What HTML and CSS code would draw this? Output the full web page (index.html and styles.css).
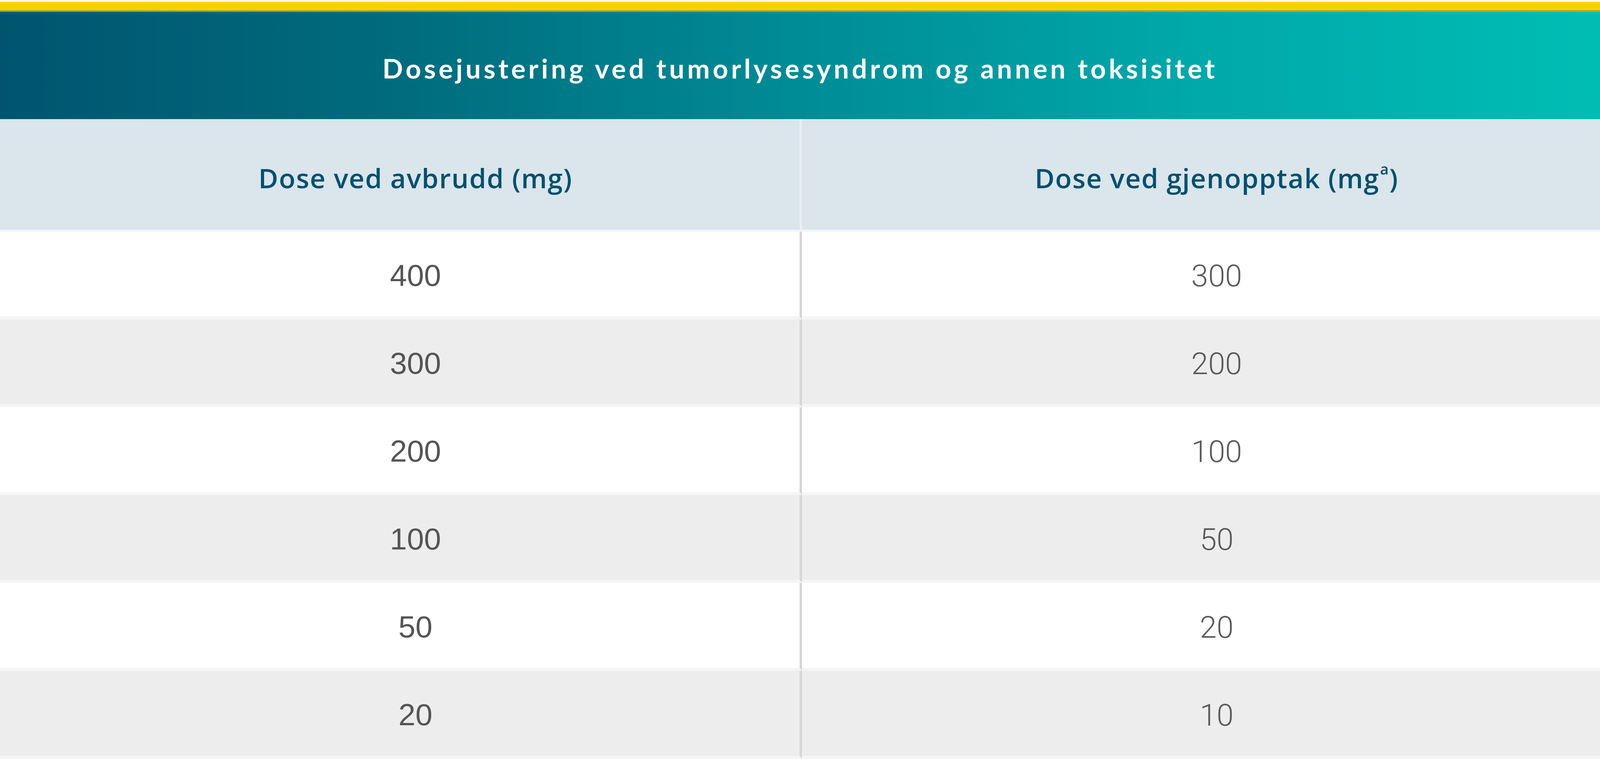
FILE: index.html
```html
<!DOCTYPE html>
<html lang="no">
<head>
<meta charset="utf-8">
<title>Dosejustering</title>
<link rel="stylesheet" href="styles.css">
</head>
<body>
<div class="page">
  <div class="top-cream"></div>
  <div class="top-yellow"></div>
  <div class="top-olive"></div>
  <div class="title-band">
    <h1 class="title">Dosejustering ved tumorlysesyndrom og annen toksisitet</h1>
  </div>
  <div class="table">
    <div class="cell head left">Dose ved avbrudd (mg)</div>
    <div class="cell head right">Dose ved gjenopptak (mg<sup>a</sup>)</div>

    <div class="cell row odd left">400</div>
    <div class="cell row odd right">300</div>

    <div class="cell row even left">300</div>
    <div class="cell row even right">200</div>

    <div class="cell row odd left">200</div>
    <div class="cell row odd right">100</div>

    <div class="cell row even left">100</div>
    <div class="cell row even right">50</div>

    <div class="cell row odd left">50</div>
    <div class="cell row odd right">20</div>

    <div class="cell row even left">20</div>
    <div class="cell row even right">10</div>
  </div>
</div>
</body>
</html>
```

FILE: styles.css
```css
:root {
  --ux: calc(100vw / 5334);
  --uy: calc(100vh / 1964);
}

html, body {
  margin: 0;
  padding: 0;
  background: #ffffff;
  overflow: hidden;
}

.page {
  width: 100%;
  display: flex;
  flex-direction: column;
}

.top-cream {
  height: calc(5 * var(--uy));
  background: #fff8e6;
}

.top-yellow {
  height: calc(21 * var(--uy));
  background: #ffd000;
}

.top-olive {
  height: calc(4 * var(--uy));
  background: #b2a82a;
}

.title-band {
  height: calc(275 * var(--uy));
  background: linear-gradient(90deg, #00546f 0%, #006c7e 25%, #008c96 50%, #00a9aa 75%, #00bdb4 100%);
  border-top: calc(5 * var(--uy)) solid rgba(255, 255, 255, 0.05);
  box-sizing: border-box;
  display: flex;
  align-items: center;
  justify-content: center;
}

.title {
  margin: 0;
  padding-top: calc(8 * var(--uy));
  font-family: "Lato", "Open Sans", sans-serif;
  font-weight: 700;
  font-size: calc(90 * var(--ux));
  letter-spacing: 0.105em;
  color: #ffffff;
  white-space: nowrap;
}

.table {
  display: grid;
  grid-template-columns: calc(2674 * var(--ux)) 1fr;
}

.cell {
  display: flex;
  align-items: center;
  justify-content: center;
  padding-left: calc(104 * var(--ux));
  box-sizing: border-box;
  white-space: nowrap;
}

.cell.left {
  border-right: calc(9 * var(--ux)) solid #d6d6d6;
}

.head {
  height: calc(288 * var(--uy));
  background: #dae5ec;
  border-bottom: calc(5 * var(--uy)) solid #f1f5f7;
  font-family: "Open Sans", "Liberation Sans", sans-serif;
  font-weight: 600;
  font-size: calc(90 * var(--ux));
  letter-spacing: 0.025em;
  color: #00506e;
  padding-top: calc(16 * var(--uy));
}

.head.left {
  border-right-color: #e9eff3;
}

.head sup {
  font-size: 55%;
  vertical-align: 0;
  position: relative;
  top: -0.6em;
  margin-left: calc(2 * var(--ux));
}

.row {
  height: calc(225 * var(--uy));
  border-bottom: calc(8 * var(--uy)) solid #f5f5f5;
  color: #555555;
  font-size: calc(102 * var(--ux));
  padding-top: calc(8 * var(--uy));
}

.row.odd {
  background: #ffffff;
}

.row.even {
  background: #ededed;
}

.row.left {
  font-family: "Liberation Sans", Arial, sans-serif;
  font-weight: 400;
}

.row.right {
  font-family: "Roboto", "Liberation Sans", sans-serif;
  font-weight: 300;
  color: #5a5a5a;
}
```
